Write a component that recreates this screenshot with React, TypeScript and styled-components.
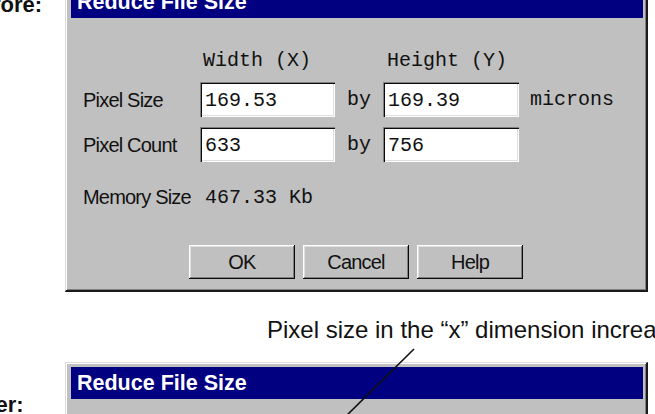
import styled, { createGlobalStyle } from "styled-components";

const GlobalStyle = createGlobalStyle`
  html, body {
    margin: 0;
    padding: 0;
    background: #ffffff;
  }
  body {
    font-family: "Liberation Sans", Arial, sans-serif;
    color: #111111;
  }
`

const Page = styled.div`
  position: relative;
  width: 655px;
  height: 414px;
  overflow: hidden;
  display: flex;
  flex-direction: column;
`

const Section = styled.div<{ shift: number }>`
  display: flex;
  align-items: flex-start;
  margin-top: ${props => props.shift}px;
`

const SideLabel = styled.div<{ drop: number }>`
  width: 100px;
  margin-left: -35px;
  padding-top: ${props => props.drop}px;
  font-family: "Liberation Sans", Arial, sans-serif;
  font-weight: bold;
  font-size: 22px;
  line-height: 24px;
  color: #111;
`

const Caption = styled.div`
  margin: 23px 0 18px 267px;
  font-family: "Liberation Sans", Arial, sans-serif;
  font-size: 24px;
  line-height: 29px;
  white-space: nowrap;
  color: #111;
`

const Dialog = styled.div`
  width: 583px;
  box-sizing: border-box;
  flex-shrink: 0;
  background: #c0c0c0;
  border-left: 1px solid #dcdcdc;
  border-top: 1px solid #dcdcdc;
  border-right: 2px solid #1a1a1a;
  border-bottom: 2px solid #1a1a1a;
  box-shadow: inset 1px 1px #ffffff, inset -1px -1px #808080;
`

const TitleBar = styled.div`
  margin: 4px 3px 0 5px;
  height: 32px;
  background: #000080;
  color: #ffffff;
  font-family: "Liberation Sans", Arial, sans-serif;
  font-weight: bold;
  font-size: 21.5px;
  line-height: 32px;
  padding-left: 6px;
`

const Body = styled.div`
  padding: 31px 0 11px 17px;
`

const FieldGrid = styled.div`
  display: grid;
  grid-template-columns: 117px 135px 48px 136px auto;
  grid-template-rows: 23px 35px 35px;
  row-gap: 10px;
  align-items: center;
`

const Mono = styled.span<{ indent?: number }>`
  font-family: "Liberation Mono", "Courier New", monospace;
  font-size: 20px;
  line-height: 23px;
  color: #111;
  padding-left: ${props => props.indent || 0}px;
  white-space: nowrap;
`

const By = styled(Mono)`
  justify-self: center;
`

const FieldLabel = styled.span`
  font-family: "Liberation Sans", Arial, sans-serif;
  font-size: 20px;
  letter-spacing: -0.8px;
  line-height: 24px;
  color: #111;
  white-space: nowrap;
`

const Field = styled.input`
  box-sizing: border-box;
  width: 100%;
  height: 35px;
  margin: 0;
  padding: 2px 0 0 5px;
  border: 0;
  outline: none;
  background: #ffffff;
  font-family: "Liberation Mono", "Courier New", monospace;
  font-size: 20px;
  color: #111;
  box-shadow: inset 1px 1px #808080, inset 2px 2px #0a0a0a, inset -1px -1px #ffffff, inset -2px -2px #dfdfdf;
`

const MemoryRow = styled.div`
  display: flex;
  align-items: center;
  margin-top: 23px;
  height: 24px;

  ${FieldLabel} {
    width: 117px;
  }
`

const Buttons = styled.div`
  display: flex;
  justify-content: center;
  gap: 8px;
  margin: 36px 0 0 -17px;
`

const Button = styled.button`
  width: 106px;
  height: 34px;
  padding: 0;
  border: 0;
  background: #c0c0c0;
  font-family: "Liberation Sans", Arial, sans-serif;
  font-size: 20px;
  letter-spacing: -0.8px;
  color: #111;
  box-shadow: inset -1px -1px #0a0a0a, inset 1px 1px #ffffff, inset -2px -2px #808080, inset 2px 2px #dfdfdf;
`

const Leader = styled.svg`
  position: absolute;
  left: 0;
  top: 0;
  pointer-events: none;
`

type Values = {
  sizeX: string
  sizeY: string
  countX: string
  countY: string
  memory: string
}

const ReduceDialog = ({values}: { values: Values }) => (
  <Dialog>
    <TitleBar>Reduce File Size</TitleBar>
    <Body>
      <FieldGrid>
        <span/>
        <Mono indent={3}>Width (X)</Mono>
        <span/>
        <Mono indent={4}>Height (Y)</Mono>
        <span/>

        <FieldLabel>Pixel Size</FieldLabel>
        <Field readOnly value={values.sizeX}/>
        <By>by</By>
        <Field readOnly value={values.sizeY}/>
        <Mono indent={11}>microns</Mono>

        <FieldLabel>Pixel Count</FieldLabel>
        <Field readOnly value={values.countX}/>
        <By>by</By>
        <Field readOnly value={values.countY}/>
        <span/>
      </FieldGrid>
      <MemoryRow>
        <FieldLabel>Memory Size</FieldLabel>
        <Mono indent={5}>{values.memory}</Mono>
      </MemoryRow>
      <Buttons>
        <Button>OK</Button>
        <Button>Cancel</Button>
        <Button>Help</Button>
      </Buttons>
    </Body>
  </Dialog>
)

const before: Values = {
  sizeX: "169.53",
  sizeY: "169.39",
  countX: "633",
  countY: "756",
  memory: "467.33 Kb",
}

const after: Values = {
  sizeX: "339.06",
  sizeY: "169.39",
  countX: "317",
  countY: "756",
  memory: "234.11 Kb",
}

export default function App() {
  return (
    <Page>
      <GlobalStyle/>
      <Section shift={-19}>
        <SideLabel drop={12}>Before:</SideLabel>
        <ReduceDialog values={before}/>
      </Section>
      <Caption>Pixel size in the “x” dimension increases</Caption>
      <Section shift={0}>
        <SideLabel drop={31}>After:</SideLabel>
        <ReduceDialog values={after}/>
      </Section>
      <Leader width="655" height="414">
        <line x1="414" y1="349" x2="340" y2="422" stroke="#111" strokeWidth="1.6"/>
      </Leader>
    </Page>
  )
}
